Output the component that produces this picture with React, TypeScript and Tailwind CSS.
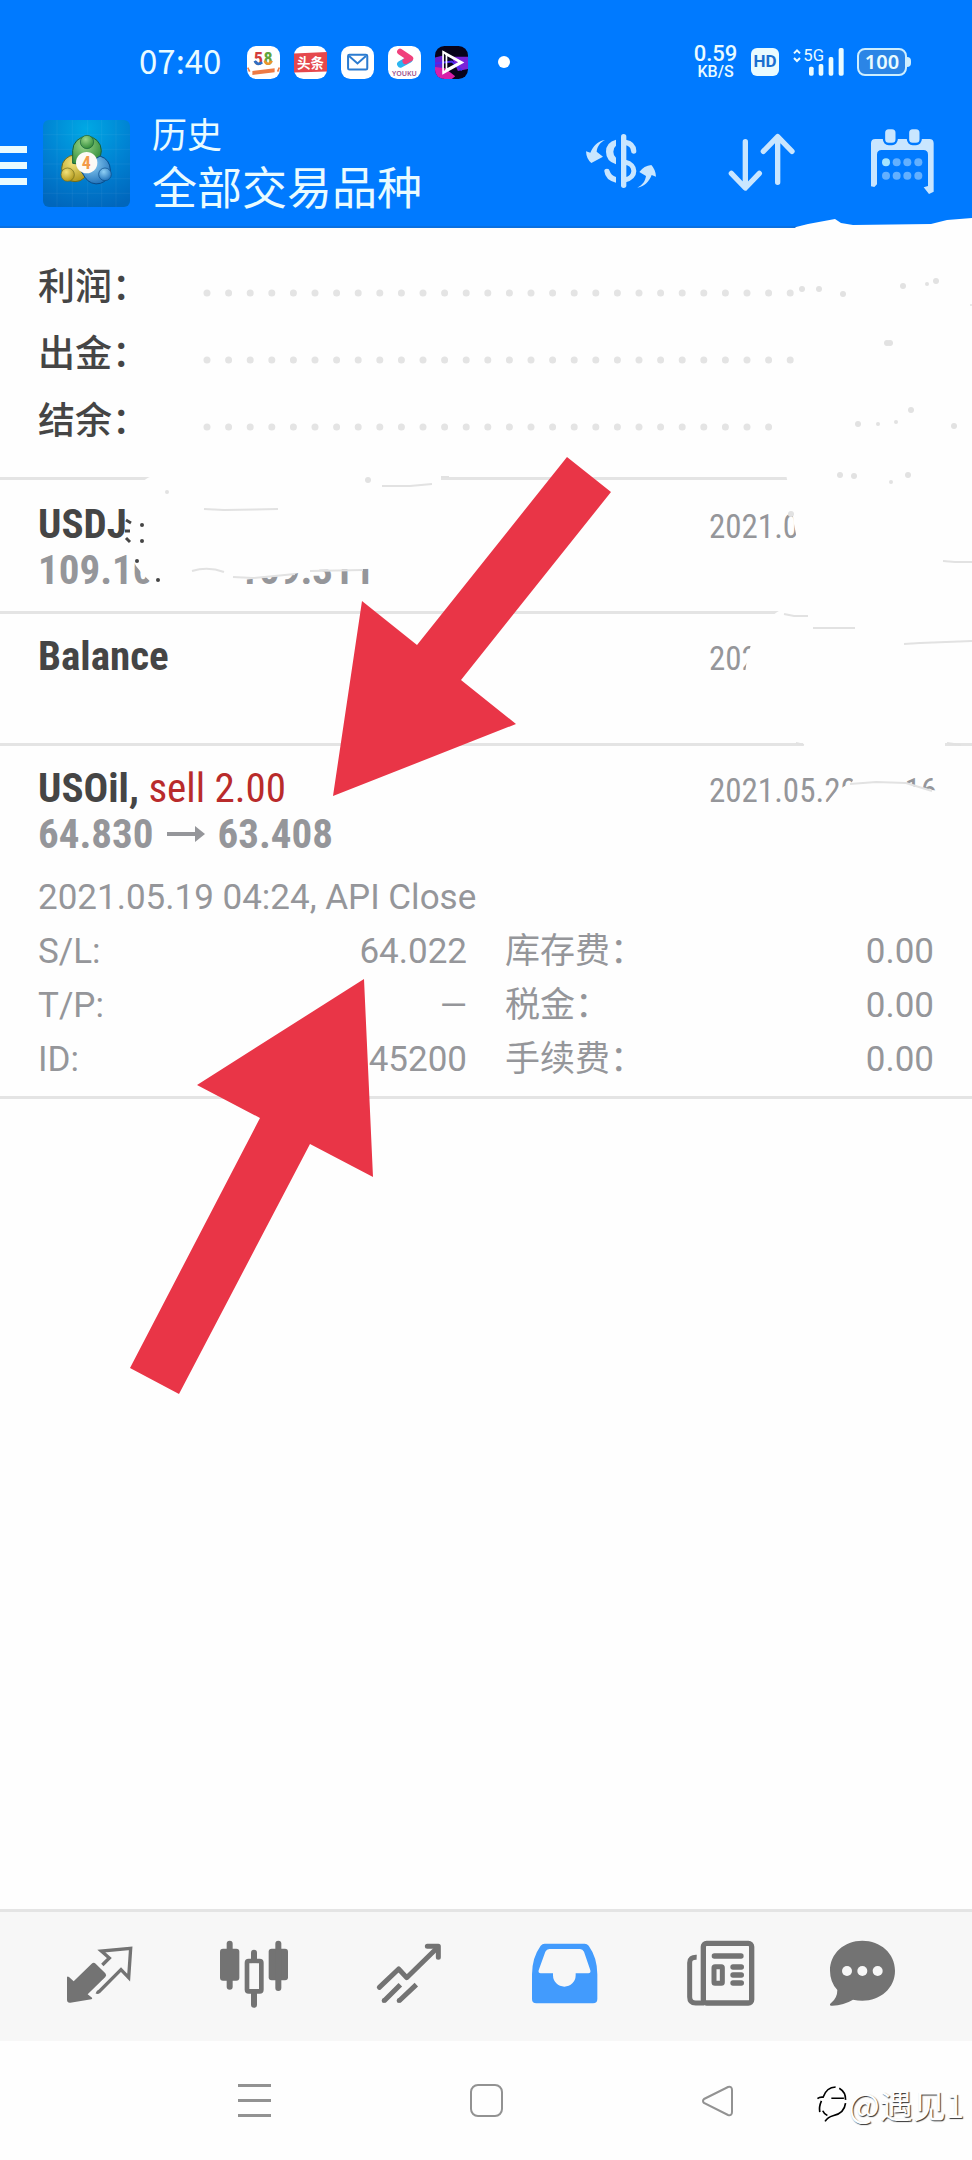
import type { ReactNode } from "react";

const condensed = "font-['Roboto_Condensed','Liberation_Sans_Narrow',Roboto,sans-serif]";

const AppLogo = () => (
    <svg viewBox="129 302 261 261" className="h-[87px] w-[87px] shrink-0 rounded-md" aria-hidden="true">
        <defs>
            <radialGradient id="sky" cx="0.5" cy="0.1" r="0.95">
                <stop offset="0" stopColor="#00a8e4" />
                <stop offset="0.55" stopColor="#0081d2" />
                <stop offset="1" stopColor="#0066bc" />
            </radialGradient>
            <radialGradient id="green" cx="0.4" cy="0.3" r="0.8">
                <stop offset="0" stopColor="#9bd68a" />
                <stop offset="1" stopColor="#23822f" />
            </radialGradient>
            <radialGradient id="gold" cx="0.4" cy="0.3" r="0.8">
                <stop offset="0" stopColor="#f2e27a" />
                <stop offset="1" stopColor="#a98f12" />
            </radialGradient>
            <radialGradient id="blue" cx="0.4" cy="0.3" r="0.8">
                <stop offset="0" stopColor="#8fd0f5" />
                <stop offset="1" stopColor="#1568b4" />
            </radialGradient>
        </defs>
        <rect x="129" y="302" width="261" height="261" fill="url(#sky)" />
        <path d="M171 302V563M217 302V563M263 302V563M305 302V563M348 302V563M129 346H390M129 390H390M129 434H390M129 478H390M129 522H390" stroke="#fff" strokeOpacity="0.08" strokeWidth="2" />
        <circle cx="225" cy="447" r="40" fill="url(#gold)" stroke="#6d6a1c" strokeWidth="3" />
        <path d="M218 432V394a43 43 0 0 1 86 0q-2 30-22 46z" fill="url(#green)" stroke="#17603b" strokeWidth="3" />
        <path d="M300 410q30 10 31 42a41 41 0 0 1-76 22l-15-24z" fill="url(#blue)" stroke="#0b4a86" strokeWidth="3" />
        <circle cx="261" cy="368" r="20" fill="url(#green)" stroke="#17603b" strokeWidth="2" />
        <circle cx="203" cy="466" r="20" fill="url(#gold)" stroke="#6d6a1c" strokeWidth="2" />
        <circle cx="315" cy="465" r="19" fill="url(#blue)" stroke="#0b4a86" strokeWidth="2" />
        <circle cx="260" cy="430" r="32" fill="#fdfaf5" />
        <text x="259" y="449" textAnchor="middle" fontSize="54" fontWeight="700" fill="#f39a48" className={condensed}>4</text>
    </svg>
);

const StatusBar = () => (
    <div className="flex h-[100px] items-center pt-6 pl-[139px] pr-[61px] text-[#e9fbff]">
        <span className="pb-1 font-['Noto_Sans_CJK_SC',sans-serif] text-[33px] leading-10">07:40</span>
        <div className="ml-[26px] flex items-center gap-[14px]">
            <svg viewBox="740 78 98 98" className="h-[33px] w-[33px]" aria-label="58">
                <rect x="740" y="78" width="98" height="98" rx="28" fill="#fff" />
                <text x="774" y="134" textAnchor="middle" fontSize="54" fontWeight="700" fill="#d33b3b" className={condensed}>5</text>
                <text x="803" y="134" textAnchor="middle" fontSize="54" fontWeight="700" fill="#62a53c" className={condensed}>8</text>
                <path d="M763 122q8 16 22 4" fill="none" stroke="#2f6fc4" strokeWidth="8" />
                <path d="M792 122q11 18 22 0" fill="none" stroke="#f0932b" strokeWidth="7" />
                <path d="M756 152l66-8v12l-66 8z" fill="#ee7b45" />
                <path d="M742 142l6 12M836 142l-5 12" stroke="#ee7b45" strokeWidth="5" />
            </svg>
            <svg viewBox="880 78 98 98" className="h-[33px] w-[33px]" aria-label="头条">
                <rect x="880" y="78" width="98" height="98" rx="28" fill="#fff" />
                <path d="M880 100l98-4v58l-98 3z" fill="#e5484d" />
                <text x="929" y="143" textAnchor="middle" fontSize="40" fontWeight="700" fill="#fff" className="font-['Noto_Sans_CJK_SC',sans-serif]">头条</text>
            </svg>
            <svg viewBox="1020 78 98 98" className="h-[33px] w-[33px]" aria-hidden="true">
                <rect x="1020" y="78" width="98" height="98" rx="28" fill="#fff" />
                <rect x="1041" y="104" width="57" height="44" rx="4" fill="none" stroke="#2b7bd0" strokeWidth="6" />
                <path d="M1044 108l25 22 25-22" fill="none" stroke="#2b7bd0" strokeWidth="6" />
            </svg>
            <svg viewBox="1161 78 98 98" className="h-[33px] w-[33px]" aria-label="YOUKU">
                <rect x="1161" y="78" width="98" height="98" rx="28" fill="#fff" />
                <path d="M1198 132l26-14" stroke="#2cb5f0" strokeWidth="20" strokeLinecap="round" />
                <path d="M1197 95l30 20-14 8" fill="none" stroke="#f0407c" strokeWidth="18" strokeLinecap="round" strokeLinejoin="round" />
                <text x="1210" y="166" textAnchor="middle" fontSize="21" fontWeight="600" fill="#a0528c" className="font-['Noto_Sans',sans-serif]">YOUKU</text>
            </svg>
            <svg viewBox="1301 78 98 98" className="h-[33px] w-[33px]" aria-hidden="true">
                <defs>
                    <clipPath id="tile"><rect x="1301" y="78" width="98" height="98" rx="28" /></clipPath>
                </defs>
                <g clipPath="url(#tile)">
                    <rect x="1301" y="78" width="98" height="98" fill="#08031c" />
                    <path d="M1301 112l24-6v70h-24z" fill="#6a1fd0" />
                    <path d="M1301 140l30 4 30 24-10 8h-50z" fill="#d81fa8" />
                    <path d="M1350 110l49 0v36l-30 6z" fill="#7a22d8" />
                    <path d="M1301 130l50-6 30 26" fill="none" stroke="#4b2bf0" strokeWidth="6" />
                </g>
                <path d="M1325 95v64l58-32zM1335 104v44l40-22zM1325 95l10 9M1325 159l10-11" fill="none" stroke="#fff" strokeWidth="5" />
            </svg>
        </div>
        <span className="ml-[30px] h-3 w-3 rounded-full bg-white" />
        <div className="ml-auto flex items-center gap-[13px]">
            <div className="flex w-[45px] flex-col items-center font-['Roboto',sans-serif] font-medium">
                <span className="text-[22px] leading-[20px]">0.59</span>
                <span className="text-[16px] leading-[16px]">KB/S</span>
            </div>
            <span className="flex h-7 w-7 items-center justify-center rounded-md bg-[#e9fbff] font-['Roboto',sans-serif] text-[17px] font-bold text-[#1a6fd0]">HD</span>
            <svg viewBox="811 85 156 84" className="h-7 w-[52px] overflow-visible" fill="currentColor" aria-hidden="true">
                <path d="M817 101l9-9 9 9M817 115l9 9 9-9" fill="none" stroke="currentColor" strokeWidth="6" />
                <text x="876" y="124" textAnchor="middle" fontSize="50" className="font-['Roboto',sans-serif]">5G</text>
                <rect x="862" y="141" width="14" height="27" rx="5" />
                <rect x="891" y="133" width="14" height="35" rx="5" />
                <rect x="921" y="112" width="14" height="56" rx="5" />
                <rect x="951" y="85" width="15" height="83" rx="5" />
            </svg>
            <div className="flex items-center">
                <span className="flex h-7 w-[50px] items-center justify-center rounded-lg border-2 border-[#cdeeff] bg-[#2b85e6] font-['Noto_Sans',sans-serif] text-[20px] font-semibold">100</span>
                <span className="h-[10px] w-1 rounded-r-sm bg-[#cdeeff]" />
            </div>
        </div>
    </div>
);

const HeaderAction = ({ label, viewBox, children }: { label: string; viewBox: string; children: ReactNode }) => (
    <button type="button" aria-label={label} className="flex w-[140px] items-center justify-center text-[#c9e6ff]">
        <svg viewBox={viewBox} className="h-[72px] w-[72px]" fill="currentColor">{children}</svg>
    </button>
);

const Header = () => (
    <header className="border-b-2 border-[#0a70e0] bg-[#007aff]">
        <StatusBar />
        <div className="flex h-[126px] items-center">
            <button type="button" aria-label="菜单" className="flex w-[43px] flex-col gap-[9px] pt-1">
                <span className="h-[7px] w-[27px] bg-[#e9fbff]" />
                <span className="h-[7px] w-[27px] bg-[#e9fbff]" />
                <span className="h-[7px] w-[27px] bg-[#e9fbff]" />
            </button>
            <AppLogo />
            <div className="ml-[22px] pb-1 font-['Noto_Sans_CJK_SC',sans-serif] text-[#e9fbff]">
                <p className="text-[35px] leading-[50px]">历史</p>
                <h1 className="text-[45px] leading-[56px]">全部交易品种</h1>
            </div>
            <div className="ml-auto flex">
                <HeaderAction label="货币" viewBox="198 324 216 216">
                    <rect x="303" y="345" width="16" height="162" rx="8" />
                    <path d="M316 370q24 4 25 26" fill="none" stroke="currentColor" strokeWidth="16" strokeLinecap="round" />
                    <path d="M316 430c34 6 34 46 0 52" fill="none" stroke="currentColor" strokeWidth="15" />
                    <path d="M288 362v18q-8 6-8 18t8 18v20q-30-10-30-38t30-36z" />
                    <path d="M253 457q-1-8 8-8 7 0 8 7 4 13 19 18v17q-32-7-35-34z" />
                    <path d="M255 363c-16 8-23 20-25 35l19 15-35 19Q199 420 198 397l13 4c9-20 22-35 44-38z" />
                    <path d="M352 506c16-8 24-20 26-35l-20-12q14-19 36-21 13 14 14 35l-13-5c-8 20-20 34-43 38z" />
                </HeaderAction>
                <HeaderAction label="排序" viewBox="618 324 216 216">
                    <path d="M676 368V506M634 463l42 44 42-44M773 490V353M730 397l43-44 43 44" fill="none" stroke="currentColor" strokeWidth="16" strokeLinecap="round" strokeLinejoin="round" />
                </HeaderAction>
                <HeaderAction label="日期" viewBox="1038 324 216 216">
                    <path d="M1053 502V373q0-13 13-13h162q13 0 13 13v145l-14 7-16-20 13-4v-94q0-14-14-14h-125q-14 0-14 14v89l-8 8z" />
                    <rect x="1092" y="327" width="38" height="48" rx="14" stroke="#007aff" strokeWidth="7" />
                    <rect x="1164" y="327" width="38" height="48" rx="14" stroke="#007aff" strokeWidth="7" />
                    <circle cx="1098" cy="430" r="12" fill="#a5e4ff" />
                    <g fill="#63b0ff">
                        <circle cx="1130" cy="430" r="12" />
                        <circle cx="1162" cy="430" r="12" />
                        <circle cx="1195" cy="430" r="12" />
                        <circle cx="1098" cy="470" r="12" />
                        <circle cx="1130" cy="470" r="12" />
                        <circle cx="1162" cy="470" r="12" />
                        <circle cx="1195" cy="470" r="12" />
                    </g>
                </HeaderAction>
            </div>
        </div>
    </header>
);

const Summary = () => (
    <section className="border-b-[3px] border-[#e4e4e4] px-[38px] pt-[22px] pb-[26px] font-['Noto_Sans_CJK_SC',sans-serif]">
        {["利润：", "出金：", "结余："].map((label, i) => (
            <div key={label} className="flex h-[67px] items-center">
                <span className="w-[165px] text-[37px] leading-[50px] font-medium text-[#454545]">{label}</span>
                <svg viewBox="0 0 600 28" className="h-7 w-[600px]" aria-hidden="true">
                    <path d={i === 2 ? "M4 23H570" : "M4 23H590"} stroke="#e4e4e4" strokeWidth="7" strokeLinecap="round" strokeDasharray="0 21.6" />
                </svg>
            </div>
        ))}
    </section>
);

const PriceArrow = () => (
    <svg viewBox="0 0 38 16" className="h-4 w-[38px]" fill="currentColor" aria-label="至">
        <path d="M0 6h28V0l10 8-10 8v-6H0z" />
    </svg>
);

type OrderProps = { symbol: string; side?: string; open?: string; close?: string; date: string; children?: ReactNode };

const Order = ({ symbol, side, open, close, date, children }: OrderProps) => (
    <li className="border-b-[3px] border-[#e4e4e4] px-[38px] pt-[19px]">
        <div className={`flex h-[46px] items-baseline justify-between ${condensed}`}>
            <h2 className="text-[41px] leading-[46px] font-bold text-[#454545]">
                {symbol}
                {side && <span className="font-normal text-[#b92b2b]"> {side}</span>}
            </h2>
            <time className="w-[225px] text-[33px] leading-[46px] whitespace-nowrap text-[#95969a]">{date}</time>
        </div>
        <p className={`flex h-[46px] items-center gap-[13px] text-[41px] leading-[46px] font-bold text-[#95969a] ${condensed}`}>
            {open}
            {close && <PriceArrow />}
            {close}
        </p>
        {children ?? <div className="h-[18px]" />}
    </li>
);

const Detail = ({ label, value }: { label: string; value: string }) => (
    <div className="flex h-[54px] items-center justify-between">
        <dt>{label}</dt>
        <dd>{value}</dd>
    </div>
);

const Orders = () => (
    <ul className="pt-0.5">
        <Order symbol="USDJ" open="109.100" close="109.311" date="2021.0" />
        <Order symbol="Balance" date="202" />
        <Order symbol="USOil," side="sell 2.00" open="64.830" close="63.408" date="2021.05.20 04:16">
            <div className="pt-[14px] pb-[9px] font-['Roboto','Noto_Sans_CJK_SC',sans-serif] text-[35px] leading-[54px] text-[#95969a]">
                <p>2021.05.19 04:24, API Close</p>
                <dl className="grid grid-flow-col grid-cols-2 grid-rows-3 gap-x-[38px]">
                    <Detail label="S/L:" value="64.022" />
                    <Detail label="T/P:" value="—" />
                    <Detail label="ID:" value="45200" />
                    <Detail label="库存费：" value="0.00" />
                    <Detail label="税金：" value="0.00" />
                    <Detail label="手续费：" value="0.00" />
                </dl>
            </div>
        </Order>
    </ul>
);

const Tab = ({ label, viewBox, active, last, children }: { label: string; viewBox: string; active?: boolean; last?: boolean; children: ReactNode }) => (
    <button
        type="button"
        aria-label={label}
        className={`flex items-center justify-center ${last ? "w-[130px]" : "flex-1"} ${active ? "text-[#429bfd]" : "text-[#737373]"}`}
    >
        <svg viewBox={viewBox} className="h-[72px] w-[72px]" fill="currentColor">{children}</svg>
    </button>
);

const TabBar = () => (
    <nav className="flex h-[132px] border-t-[3px] border-[#e4e4e4] bg-[#f7f7f7] pb-0.5 pl-[22px] pr-[45px]">
        <Tab label="行情" viewBox="190 151 216 216">
            <path d="M199 263q1-5 6-1l14 13 54-53q6-6 12 0l29 29q5 6 0 11l-53 52 13 10q2 4-2 5l-63 10q-10 1-10-9z" />
            <path d="M305 226l21-21-24-21 88-8-6 88-23-24-66 66q-4 3-8 1" fill="none" stroke="currentColor" strokeWidth="10" />
        </Tab>
        <Tab label="图表" viewBox="655 151 216 216">
            <rect x="658" y="177" width="58" height="96" rx="9" />
            <rect x="678" y="153" width="18" height="147" rx="9" />
            <rect x="804" y="177" width="58" height="95" rx="9" />
            <rect x="824" y="153" width="18" height="151" rx="9" />
            <rect x="751" y="180" width="18" height="40" rx="9" />
            <rect x="751" y="300" width="18" height="54" rx="9" />
            <rect x="739" y="214" width="43" height="91" rx="5" fill="none" stroke="currentColor" strokeWidth="14" />
            <rect x="748" y="222" width="26" height="76" rx="7" fill="#f7f7f7" />
        </Tab>
        <Tab label="交易" viewBox="1120 151 216 216">
            <g fill="none" stroke="currentColor" strokeWidth="15" strokeLinejoin="round">
                <path d="M1136 293l58-55 24 26 92-90" strokeLinecap="round" />
                <path d="M1280 170h33v33" strokeLinecap="round" />
                <path d="M1150 334l49-49M1195 334l52-49" />
            </g>
            <circle cx="1150" cy="333" r="7" />
            <circle cx="1195" cy="333" r="7" />
        </Tab>
        <Tab label="历史" viewBox="145 151 216 216" active>
            <path fillRule="evenodd" d="M192 162h120q7 0 12 6 26 36 26 86v74q0 13-13 13H167q-13 0-13-13v-74q0-50 26-86 5-6 12-6zM206 178q-8 0-12 8l-20 56q-2 9 6 9h37v6a34 34 0 0 0 68 0v-6h38q8 0 6-9l-19-56q-4-8-12-8z" />
        </Tab>
        <Tab label="新闻" viewBox="610 151 216 216">
            <rect x="668" y="161" width="145" height="179" rx="10" fill="none" stroke="currentColor" strokeWidth="16" />
            <path d="M648 203q-21-1-21 16v103q0 18 18 18h25" fill="none" stroke="currentColor" strokeWidth="15" />
            <rect x="693" y="191" width="96" height="16" rx="8" />
            <rect x="700" y="231" width="25" height="50" rx="3" fill="none" stroke="currentColor" strokeWidth="15" />
            <rect x="749" y="224" width="41" height="16" rx="8" />
            <rect x="749" y="248" width="41" height="16" rx="8" />
            <rect x="749" y="272" width="41" height="16" rx="8" />
        </Tab>
        <Tab label="消息" viewBox="1038 151 216 216" last>
            <path d="M1147 153c54 0 98 38 98 90s-44 90-98 90q-14 0-28-3-28 17-62 18c-10 0-8-5-3-9q18-14 18-38-22-24-22-58c0-52 43-90 97-90z" />
            <g fill="#f7f7f7">
                <circle cx="1101" cy="244" r="15" />
                <circle cx="1147" cy="244" r="15" />
                <circle cx="1193" cy="244" r="15" />
            </g>
        </Tab>
    </nav>
);

const SystemBar = () => (
    <footer className="relative flex h-[119px] items-center justify-center bg-[#fefefe] text-[#929292]">
        <button type="button" aria-label="最近任务" className="flex w-[232px] flex-col items-center gap-3">
            <span className="h-[3px] w-[33px] bg-current" />
            <span className="h-[3px] w-[33px] bg-current" />
            <span className="h-[3px] w-[33px] bg-current" />
        </button>
        <button type="button" aria-label="主屏幕" className="flex w-[232px] justify-center">
            <span className="h-[33px] w-[33px] rounded-lg border-2 border-current" />
        </button>
        <button type="button" aria-label="返回" className="flex w-[232px] justify-center">
            <svg viewBox="0 0 32 32" className="h-8 w-8" fill="none" stroke="currentColor" strokeWidth="2">
                <path d="M2 14 26 2q4-1 4 3v22q0 4-4 3L2 18q-2-2 0-4z" />
            </svg>
        </button>
        <div className="absolute right-2 bottom-[37px] flex items-center">
            <svg viewBox="1010 600 96 115" className="h-[38px] w-8" fill="none" stroke="#000" strokeWidth="5" aria-hidden="true">
                <path d="M1014 641q6-5 17-4 10-30 38-31M1026 648q-8 18-5 34M1080 610q20 12 19 35M1056 640h38M1099 655q-4 32-38 38-16 4-24 17M1030 678q4 10 14 14" />
            </svg>
            <span className="font-['Noto_Sans_CJK_SC',sans-serif] text-[33px] leading-[38px] text-[#fefefe] [text-shadow:1px_1px_1px_#333]">@遇见1</span>
        </div>
    </footer>
);

const specks = [
    [802, 289, 3], [819, 289, 3], [843, 294, 3], [903, 286, 3], [927, 284, 2], [936, 281, 3],
    [887, 343, 3], [890, 343, 3], [858, 424, 3], [878, 424, 2], [896, 422, 2], [911, 410, 3],
    [954, 426, 3], [840, 475, 3], [854, 476, 3], [908, 475, 3], [891, 482, 2], [971, 305, 1],
    [368, 480, 3], [167, 492, 2], [791, 514, 3],
];

// Erased areas, leftover scratches and the two pointers drawn over the list
const Markup = () => (
    <svg viewBox="0 0 972 2160" className="pointer-events-none absolute top-0 left-0 w-full" aria-hidden="true">
        <g fill="#fefefe">
            <path d="M792 231l4-4 12-3 27-5 6 4 12 2 78-1 16-4 25-2v13z" />
            <path d="M152 476h289v92l-78 1-53 1-20 5-48 5-1 8h-78q-14-4-27-22-8-14-9-44 3-38 25-46z" />
            <path d="M786 474h186v90H806q-8-16-12-40-4-30-8-50z" />
            <path d="M784 608h188v92H746q-4-18 2-44 6-32 36-48zM803 740h142v12H803z" />
            <path d="M819 812l16-19 8-6 9-5 5-10h42l4 11 13 4 16 3 18 2v20z" />
        </g>
        <g fill="#e2e2e2">
            {specks.map(([x, y, r]) => (
                <circle key={`${x}-${y}`} cx={x} cy={y} r={r} />
            ))}
        </g>
        <g fill="none" stroke="#e2e2e2" strokeWidth="2">
            <path d="M204 509l20 1 54-1M382 486h28l22-2M441 477h8M192 571q16-5 32 1M233 577l20 1 42-4M310 571l53-1" />
            <path d="M943 561l12 1h17M784 614l10 2h14M813 628h42M904 644l16-1 52-2M796 743l8 2M947 743l14 2M850 784l26-2 30 1 26 8" />
        </g>
        <g fill="none" stroke="#454545" strokeWidth="3">
            <path d="M126 520l5 3M125 531h5M126 538l4 4" />
        </g>
        <g fill="#454545">
            <circle cx="142" cy="525" r="2" />
            <circle cx="142" cy="541" r="2" />
            <circle cx="137" cy="561" r="2" />
            <circle cx="158" cy="580" r="2" />
        </g>
        <g fill="#e93547">
            <path d="M567 457 611 492 461 680 516 724 333 796 362 601 417 645z" />
            <path d="M364 979 373 1177 310 1144 179 1394 130 1368 260 1118 197 1085z" />
        </g>
    </svg>
);

export default function App() {
    return (
        <div className="relative flex min-h-screen flex-col bg-[#fefefe]">
            <Header />
            <main className="flex-1">
                <Summary />
                <Orders />
            </main>
            <TabBar />
            <SystemBar />
            <Markup />
        </div>
    );
}
